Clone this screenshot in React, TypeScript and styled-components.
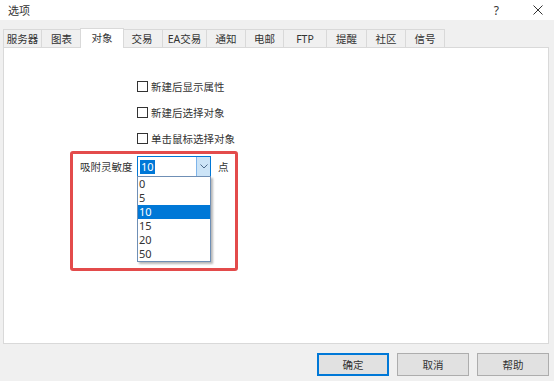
import * as React from "react";
import styled, { createGlobalStyle } from "styled-components";

const GlobalStyle = createGlobalStyle`
    html, body {
        margin: 0;
        padding: 0;
        background: #f0f0f0;
    }
    body {
        font-family: "Noto Sans", "Noto Sans CJK SC", sans-serif;
        font-size: 10.5px;
        color: #333333;
    }
`;

const Window = styled.div`
    width: 554px;
    height: 381px;
    display: flex;
    flex-direction: column;
    background: #f0f0f0;
    overflow: hidden;
`;

const TitleBar = styled.div`
    height: 20px;
    background: #ffffff;
    display: flex;
    align-items: center;
    justify-content: space-between;
    padding: 0 8px;
    box-sizing: border-box;
`;

const Title = styled.span`
    font-size: 11px;
    line-height: 1;
`;

const TitleControls = styled.div`
    display: flex;
    align-items: center;
    gap: 34px;
    padding-right: 3px;
    font-size: 12px;
    color: #333;
`;

const Body = styled.div`
    display: flex;
    flex-direction: column;
    padding: 8px 5px 0 3px;
`;

const TabStrip = styled.div`
    display: flex;
    align-items: flex-end;
    position: relative;
    z-index: 1;
`;

const Tab = styled.div<{ $w: number; $active?: boolean; $first?: boolean }>`
    box-sizing: border-box;
    width: ${p => p.$w + (p.$active ? 4 : 0)}px;
    height: ${p => (p.$active ? 20 : 18)}px;
    margin: ${p => (p.$active ? "0 -2px -1px -2px" : "0")};
    background: ${p => (p.$active ? "#ffffff" : "#f0f0f0")};
    border: 1px solid #d9d9d9;
    border-bottom: none;
    border-left-width: ${p => (p.$first || p.$active ? 1 : 0)}px;
    display: flex;
    align-items: center;
    justify-content: center;
    padding-bottom: ${p => (p.$active ? 3 : 0)}px;
    font-size: 10.5px;
    white-space: nowrap;
    position: relative;
    z-index: ${p => (p.$active ? 2 : 1)};
`;

const Panel = styled.div`
    box-sizing: border-box;
    height: 297px;
    background: #ffffff;
    border: 1px solid #d9d9d9;
    padding: 25px 0 0 66px;
    display: flex;
    flex-direction: column;
`;

const CheckList = styled.div`
    display: flex;
    flex-direction: column;
    margin-left: 67px;
`;

const CheckRow = styled.label`
    height: 26px;
    display: flex;
    align-items: center;
    gap: 3px;
`;

const CheckBox = styled.span`
    box-sizing: border-box;
    width: 11px;
    height: 11px;
    border: 1px solid #333333;
    background: #ffffff;
`;

const Highlight = styled.div`
    box-sizing: border-box;
    width: 168px;
    height: 120px;
    border: 3px solid #e34b4b;
    border-radius: 3px;
    padding: 2px 0 0 7px;
`;

const FieldRow = styled.div`
    display: flex;
    align-items: center;
    height: 21px;
`;

const FieldLabel = styled.span`
    width: 57px;
`;

const Combo = styled.div`
    position: relative;
    box-sizing: border-box;
    width: 74px;
    height: 21px;
    border: 1px solid #0078d7;
    background: #ffffff;
    display: flex;
    align-items: stretch;
`;

const ComboText = styled.div`
    flex: 1;
    display: flex;
    align-items: center;
    padding-left: 2px;
`;

const Selected = styled.span`
    background: #0078d7;
    color: #ffffff;
    height: 14px;
    line-height: 14px;
    padding: 0 1px;
    font-size: 11px;
`;

const ArrowButton = styled.div`
    width: 13px;
    background: #cce4f7;
    border-left: 1px solid #7eb4ea;
    display: flex;
    align-items: center;
    justify-content: center;
`;

const Unit = styled.span`
    margin-left: 7px;
`;

const DropList = styled.div`
    position: absolute;
    top: 100%;
    left: -1px;
    width: 74px;
    box-sizing: border-box;
    border: 1px solid #6f8fb5;
    background: #ffffff;
    box-shadow: 2px 2px 2px rgba(0, 0, 0, 0.28);
    z-index: 5;
`;

const DropItem = styled.div<{ $active?: boolean }>`
    height: 14px;
    line-height: 14px;
    padding-left: 1px;
    font-size: 11px;
    background: ${p => (p.$active ? "#0078d7" : "transparent")};
    color: ${p => (p.$active ? "#ffffff" : "#333333")};
`;

const ButtonRow = styled.div`
    display: flex;
    justify-content: flex-end;
    gap: 8px;
    padding-top: 9px;
`;

const DialogButton = styled.button<{ $default?: boolean }>`
    box-sizing: border-box;
    width: 72px;
    height: 23px;
    background: #e1e1e1;
    border: 1px solid ${p => (p.$default ? "#0078d7" : "#adadad")};
    box-shadow: ${p => (p.$default ? "inset 0 0 0 1px #0078d7" : "none")};
    font-family: inherit;
    font-size: 10.5px;
    color: #333333;
    padding: 0;
`;

const tabs = [
    { label: "服务器", w: 39 },
    { label: "图表", w: 40 },
    { label: "对象", w: 40, active: true },
    { label: "交易", w: 41 },
    { label: "EA交易", w: 44 },
    { label: "通知", w: 39 },
    { label: "电邮", w: 38 },
    { label: "FTP", w: 43 },
    { label: "提醒", w: 40 },
    { label: "社区", w: 39 },
    { label: "信号", w: 39 },
];

const checks = ["新建后显示属性", "新建后选择对象", "单击鼠标选择对象"];
const options = ["0", "5", "10", "15", "20", "50"];

export default function App() {
    return <>
        <GlobalStyle />
        <Window>
            <TitleBar>
                <Title>选项</Title>
                <TitleControls>
                    <span>?</span>
                    <svg width="10" height="10" viewBox="0 0 10 10">
                        <path d="M0.5 0.5 L9.5 9.5 M9.5 0.5 L0.5 9.5" stroke="#333" strokeWidth="1" />
                    </svg>
                </TitleControls>
            </TitleBar>
            <Body>
                <TabStrip>
                    {tabs.map((t, i) => (
                        <Tab key={t.label} $w={t.w} $active={t.active} $first={i === 0}>{t.label}</Tab>
                    ))}
                </TabStrip>
                <Panel>
                    <CheckList>
                        {checks.map(c => (
                            <CheckRow key={c}><CheckBox />{c}</CheckRow>
                        ))}
                    </CheckList>
                    <Highlight>
                        <FieldRow>
                            <FieldLabel>吸附灵敏度</FieldLabel>
                            <Combo>
                                <ComboText><Selected>10</Selected></ComboText>
                                <ArrowButton>
                                    <svg width="8" height="5" viewBox="0 0 8 5">
                                        <path d="M0.5 0.5 L4 4 L7.5 0.5" fill="none" stroke="#4d6a8a" strokeWidth="1" />
                                    </svg>
                                </ArrowButton>
                                <DropList>
                                    {options.map(o => (
                                        <DropItem key={o} $active={o === "10"}>{o}</DropItem>
                                    ))}
                                </DropList>
                            </Combo>
                            <Unit>点</Unit>
                        </FieldRow>
                    </Highlight>
                </Panel>
                <ButtonRow>
                    <DialogButton $default>确定</DialogButton>
                    <DialogButton>取消</DialogButton>
                    <DialogButton>帮助</DialogButton>
                </ButtonRow>
            </Body>
        </Window>
    </>;
}
